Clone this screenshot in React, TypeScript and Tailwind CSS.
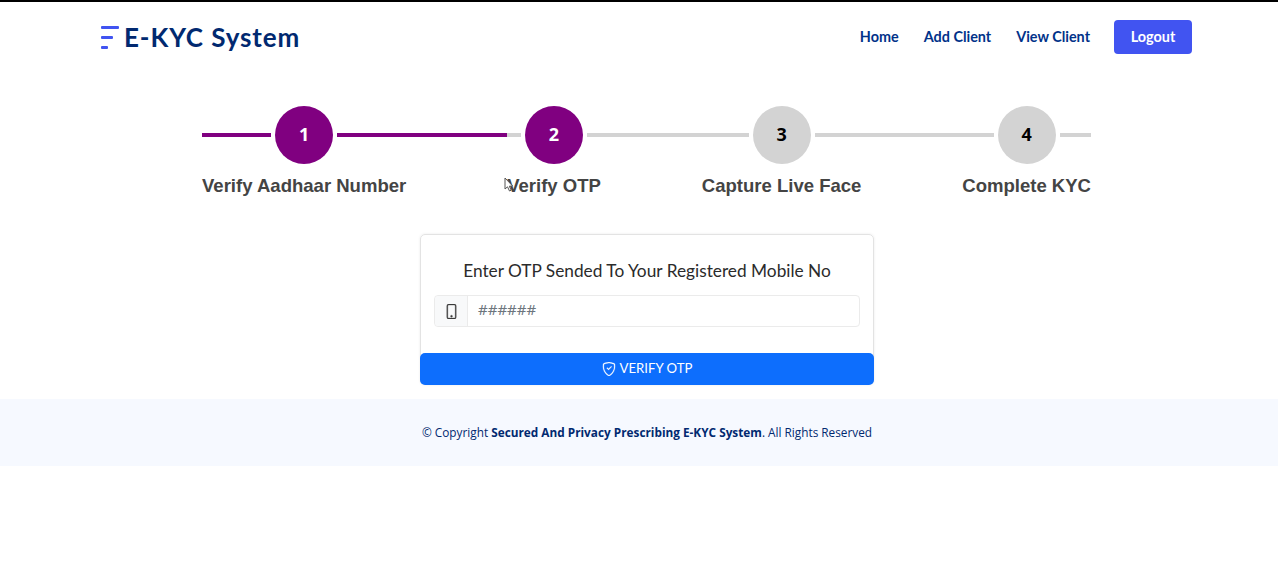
import { BsPhone, BsShieldCheck } from "react-icons/bs";

const lato = "font-['Lato','Noto_Sans',sans-serif]";

function Line({ done, className = "" }: { done?: boolean; className?: string }) {
  return <div className={`h-1 ${done ? "bg-[#800080]" : "bg-[#d3d3d3]"} ${className}`} />;
}

function Step({ n, label, active, leftDone, rightDone }: { n: number; label: string; active?: boolean; leftDone?: boolean; rightDone?: boolean }) {
  return (
    <div className="flex flex-col items-stretch">
      <div className="flex items-center gap-1">
        <Line done={leftDone} className="flex-1" />
        <div className={`w-[58px] h-[58px] rounded-full flex items-center justify-center pb-0.5 text-lg font-bold font-['Open_Sans',sans-serif] ${active ? "bg-[#800080] text-white" : "bg-[#d3d3d3] text-black"}`}>
          {n}
        </div>
        <Line done={rightDone} className="flex-1" />
      </div>
      <div className="mt-[10px] text-[18.55px] leading-[24px] font-bold text-[#444444] font-['Liberation_Sans',sans-serif] whitespace-nowrap">{label}</div>
    </div>
  );
}

function Connector({ done }: { done?: boolean }) {
  return (
    <div className="flex-1 h-[58px] flex items-center">
      <Line done={done} className="w-full" />
    </div>
  );
}

export default function App() {
  return (
    <div className="min-h-[587px] bg-white relative">
      <div className="h-0.5 bg-black" />
      <header className="h-[70px] flex items-center justify-between pl-[100px] pr-[86px]">
        <div className="flex items-center gap-[5px]">
          <svg width="19" height="24" viewBox="0 0 19 24" className="shrink-0">
            <rect x="1" y="1" width="18" height="3" rx="1" fill="#4154f1" />
            <rect x="1" y="11" width="12" height="3" rx="1" fill="#4154f1" />
            <rect x="1" y="21" width="7" height="3" rx="1" fill="#4154f1" />
          </svg>
          <span className={`text-[26px] leading-8 font-bold text-[#012970] tracking-[0.9px] ${lato}`}>E-KYC System</span>
        </div>
        <nav className={`flex items-center text-[14.4px] font-bold text-[#013289] ${lato}`}>
          <span>Home</span>
          <span className="ml-[25px]">Add Client</span>
          <span className="ml-[25px]">View Client</span>
          <span className="ml-[24px] w-[78px] h-[34px] rounded bg-[#4154f1] text-white flex items-center justify-center">Logout</span>
        </nav>
      </header>

      <section className="mt-[34px] ml-[202px] w-[889px] flex items-start">
        <Step n={1} label="Verify Aadhaar Number" active leftDone rightDone />
        <Connector done />
        <Step n={2} label="Verify OTP" active />
        <Connector />
        <Step n={3} label="Capture Live Face" />
        <Connector />
        <Step n={4} label="Complete KYC" />
      </section>

      <section className={`mt-[36px] ml-[420px] w-[454px] h-[151px] rounded-[5px] border border-[#e3e3e3] shadow-[0_0_3px_rgba(0,0,0,0.08)] flex flex-col ${lato}`}>
        <h2 className="mt-[24px] text-center text-[17.3px] leading-6 text-[#2b2b2b]">Enter OTP Sended To Your Registered Mobile No</h2>
        <div className="mt-[12px] mx-[13px] h-[32px] flex rounded border border-[#ebebeb]">
          <div className="w-[33px] bg-[#f8f9fa] border-r border-[#ebebeb] flex items-center justify-center rounded-l">
            <BsPhone className="text-[#3a3a3a] text-[15px] stroke-[0.4]" />
          </div>
          <div className="pl-[10px] pb-1 flex items-center text-[15px] text-[#6c757d] font-['Noto_Sans',sans-serif]">######</div>
        </div>
        <button className="mt-auto -mx-px -mb-px h-[32px] rounded-[5px] bg-[#0d6efd] text-white text-[13.2px] flex items-center justify-center gap-1">
          <BsShieldCheck className="text-[14px] stroke-[0.3]" />
          VERIFY OTP
        </button>
      </section>

      <footer className="mt-[14px] h-[67px] bg-[#f6f9ff] flex items-center justify-center pl-4 pt-px text-[11.8px] text-[#012970] font-['Open_Sans',sans-serif]">
        <span>© Copyright <strong className="font-bold">Secured And Privacy Prescribing E-KYC System</strong>. All Rights Reserved</span>
      </footer>

      <svg width="11" height="16" viewBox="0 0 11 16" className="absolute left-[504px] top-[177px]">
        <path d="M1 1 L1 12 L3.5 9.8 L5.5 14 L7.2 13.2 L5.3 9.2 L8.6 9 Z" fill="#fff" stroke="#555" strokeWidth="1" />
      </svg>
    </div>
  );
}
